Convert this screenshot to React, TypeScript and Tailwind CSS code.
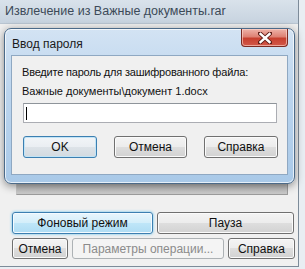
import React from "react";

const font = { fontFamily: '"Liberation Sans", Arial, sans-serif' };

function Btn({ children, className = "", kind = "normal" }: { children: React.ReactNode; className?: string; kind?: "normal" | "default" | "hot" | "disabled" }) {
  const base = "flex items-center justify-center rounded-[3px] border text-[12px] leading-none whitespace-nowrap";
  const styles: Record<string, string> = {
    normal:
      "border-[#707070] text-[#111] bg-[linear-gradient(to_bottom,#f4f4f4_0%,#ececec_50%,#dedede_50%,#d2d2d2_100%)] shadow-[inset_0_0_0_1px_#fbfbfb]",
    default:
      "border-[#3c7fb1] text-[#111] bg-[linear-gradient(to_bottom,#f2f5f8_0%,#eaeef2_50%,#dde3e8_50%,#d3dae0_100%)] shadow-[inset_0_0_0_1px_#c2e4f6]",
    hot:
      "border-[#3c7fb1] text-[#111] bg-[linear-gradient(to_bottom,#e8f6fd_0%,#d3eefa_50%,#bfe6f8_50%,#aedcf3_100%)] shadow-[inset_0_0_0_1px_#f4fbff,0_0_3px_#5fc0ec]",
    disabled: "border-[#adb2b5] text-[#8b8b8b] bg-[#f4f4f4]",
  };
  return <div className={`${base} ${styles[kind]} ${className}`}>{children}</div>;
}

export default function App() {
  return (
    <div className="relative w-[305px] h-[269px] overflow-hidden bg-[#e9eef3]" style={font}>
      {/* outer window */}
      <div className="flex flex-col w-[299px] h-[267px] border-r border-b border-[#7d8b99]">
        <div className="h-[23px] flex items-center pl-[5px] pb-[1px] bg-[linear-gradient(to_bottom,#d9e2eb,#c7d3df)] text-[12.5px] text-[#3c4a58] whitespace-nowrap">
          Извлечение из Важные документы.rar
        </div>
        <div className="flex-1 flex flex-col bg-[#f0f0f0] pl-[12px] border-t border-[#b9c5d1]">
          <div className="mt-[96px] ml-[4px] w-[272px] h-[75px] border border-[#9c9c9c] border-l-[#c8c8c8] bg-[linear-gradient(to_bottom,#8e8e8e,#a8a8a8_70%,#cbcbcb)]" />
          <div className="mt-[17px] flex gap-[4px]">
            <Btn kind="hot" className="w-[141px] h-[22px]">Фоновый режим</Btn>
            <Btn className="w-[137px] h-[22px]">Пауза</Btn>
          </div>
          <div className="mt-[4px] flex gap-[4px]">
            <Btn className="w-[56px] h-[21px]">Отмена</Btn>
            <Btn kind="disabled" className="w-[152px] h-[21px]">Параметры операции...</Btn>
            <Btn className="w-[67px] h-[21px]">Справка</Btn>
          </div>
        </div>
      </div>

      {/* modal dialog */}
      <div className="absolute left-[4px] top-[28px] w-[291px] h-[156px] rounded-[7px] border border-[#4b6a89] bg-[linear-gradient(to_bottom,#d3e3f3,#bcd5ee_40%,#a9c9e8)] shadow-[0_2px_8px_rgba(0,0,0,0.45),inset_0_0_0_1px_rgba(255,255,255,0.7)] flex flex-col">
        <div className="h-[26px] flex items-start justify-between pl-[7px] pr-[6px]">
          <div className="pt-[6px] text-[12px] text-[#1a1a1a] whitespace-nowrap">Ввод пароля</div>
          <div className="w-[47px] h-[18px] rounded-b-[4px] border border-t-0 border-[#7b2a22] bg-[linear-gradient(to_bottom,#eeb3a9_0%,#de8274_45%,#c7402f_55%,#d2584a_100%)] shadow-[inset_0_0_0_1px_rgba(255,220,210,0.6)] flex items-center justify-center">
            <svg width="14" height="12" viewBox="0 0 14 12">
              <path d="M2 1.5 L12 10.5 M12 1.5 L2 10.5" stroke="#5a1a14" strokeWidth="4.2" strokeLinecap="square" />
              <path d="M2.5 2 L11.5 10 M11.5 2 L2.5 10" stroke="#ffffff" strokeWidth="2.4" strokeLinecap="square" />
            </svg>
          </div>
        </div>
        <div className="mx-[6px] w-[277px] h-[120px] border border-[#8fa8c2] bg-[#f0f0f0] flex flex-col pl-[10px]">
          <div className="mt-[8px] h-[16px] flex items-center text-[11px] tracking-[-0.2px] text-[#111] whitespace-nowrap">Введите пароль для зашифрованного файла:</div>
          <div className="mt-[3px] h-[16px] flex items-center text-[11px] text-[#111] whitespace-nowrap">Важные документы\документ 1.docx</div>
          <div className="mt-[4px] ml-[1px] w-[254px] h-[20px] border border-[#abadb3] border-t-[#8e949a] bg-white flex items-center pl-[2px]">
            <div className="w-[1px] h-[13px] bg-black" />
          </div>
          <div className="mt-[13px] ml-[1px] flex gap-[17px]">
            <Btn kind="default" className="w-[74px] h-[22px]">OK</Btn>
            <Btn className="w-[73px] h-[22px]">Отмена</Btn>
            <Btn className="w-[74px] h-[22px]">Справка</Btn>
          </div>
        </div>
      </div>
    </div>
  );
}
